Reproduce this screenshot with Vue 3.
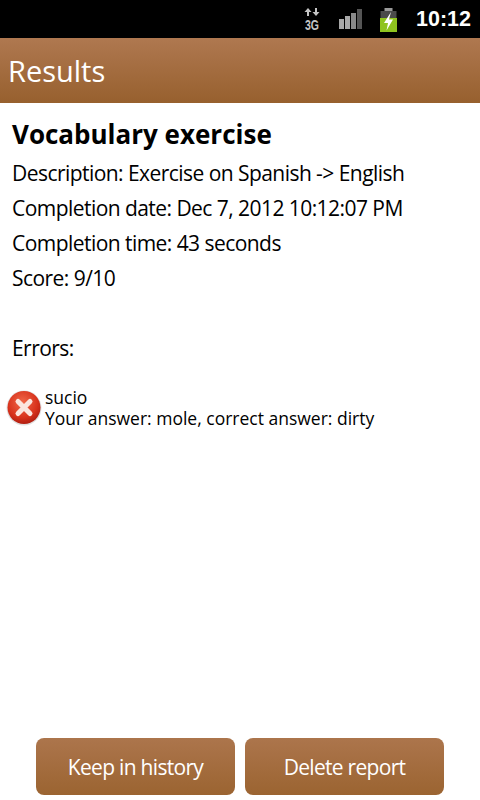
<script setup>
const lines = [
  'Description: Exercise on Spanish -> English',
  'Completion date: Dec 7, 2012 10:12:07 PM',
  'Completion time: 43 seconds',
  'Score: 9/10'
]
</script>

<template>
  <div class="screen">
    <div class="status">
      <svg class="i3g" width="16" height="28" viewBox="0 0 16 28">
        <path d="M4 3 L0.5 7 H3 V11 H5 V7 H7.5 Z M12 11 L8.5 7 H11 V3 H13 V7 H15.5 Z" fill="#c4c4c4"/>
        <text transform="translate(1 24.5) scale(1 1.4)" class="t3g">3G</text>
      </svg>
      <svg class="signal" width="23" height="20" viewBox="0 0 23 20">
        <rect x="0" y="10" width="5" height="10" fill="#a8a8a8"/>
        <rect x="6" y="7" width="5" height="13" fill="#a8a8a8"/>
        <rect x="12" y="4" width="5" height="16" fill="#8a8a8a"/>
        <rect x="18" y="0" width="5" height="20" fill="#555"/>
      </svg>
      <svg class="battery" width="17" height="24" viewBox="0 0 17 24">
        <rect x="4.5" y="0" width="8" height="3" fill="#9a9a9a"/>
        <rect x="0.5" y="3" width="16" height="7" fill="#4a4a4a"/>
        <rect x="0" y="10" width="17" height="14" fill="#8fc31f"/>
        <path d="M11 4 L4 15 H8 L6.5 22.5 L13 11.5 H9 Z" fill="#fff"/>
      </svg>
      <span class="clock">10:12</span>
    </div>
    <header class="titlebar">Results</header>
    <main class="content">
      <h1 class="heading">Vocabulary exercise</h1>
      <p v-for="l in lines" :key="l" class="line">{{ l }}</p>
      <p class="line errors">Errors:</p>
      <div class="err-row">
        <svg class="err-icon" width="36" height="36" viewBox="0 0 36 36">
          <defs>
            <radialGradient id="rg" cx="45%" cy="35%" r="70%">
              <stop offset="0%" stop-color="#f0694a"/>
              <stop offset="65%" stop-color="#d8321c"/>
              <stop offset="100%" stop-color="#a81a0e"/>
            </radialGradient>
          </defs>
          <circle cx="18" cy="18" r="17.5" fill="#000" opacity=".12"/>
          <circle cx="18" cy="17.5" r="16.5" fill="url(#rg)"/>
          <path d="M12 11.5 L24 23.5 M24 11.5 L12 23.5" stroke="#fbe6df" stroke-width="5" stroke-linecap="round"/>
        </svg>
        <div class="err-text">
          <div>sucio</div>
          <div>Your answer: mole, correct answer: dirty</div>
        </div>
      </div>
    </main>
    <footer class="actions">
      <button class="btn">Keep in history</button>
      <button class="btn">Delete report</button>
    </footer>
  </div>
</template>

<style>
html, body { margin: 0; background: #fff; }
</style>

<style scoped>
.screen {
  width: 480px;
  height: 800px;
  display: flex;
  flex-direction: column;
  overflow: hidden;
  background: #fff;
  font-family: "Open Sans", "Noto Sans", sans-serif;
  color: #000;
}
.status {
  height: 38px;
  flex: none;
  background: #000;
  display: flex;
  align-items: center;
  justify-content: flex-end;
  padding-right: 9px;
  box-sizing: border-box;
}
.i3g { margin-right: 19px; }
.t3g { font: bold 10.5px "Liberation Sans", sans-serif; fill: #c4c4c4; }
.signal { margin-right: 18px; }
.battery { margin-right: 19px; margin-top: 1px; }
.clock {
  color: #fff;
  font: bold 21.5px "Liberation Sans", sans-serif;
}
.titlebar {
  height: 65px;
  flex: none;
  box-sizing: border-box;
  padding-left: 8px;
  display: flex;
  align-items: center;
  color: #fff;
  font-size: 29px;
  background: linear-gradient(#af7850, #97602e);
}
.content {
  flex: 1;
  padding-top: 12px;
}
.heading {
  margin: 0 0 2px 12px;
  font-size: 26px;
  line-height: 39px;
  font-weight: 700;
}
.line {
  margin: 0 0 0 12px;
  font-size: 21px;
  letter-spacing: -0.55px;
  line-height: 35px;
}
.errors { margin-top: 35px; }
.err-row {
  display: flex;
  align-items: center;
  margin-top: 21px;
  padding-left: 6px;
}
.err-icon { flex: none; margin-right: 3px; }
.err-text { font-size: 17.5px; line-height: 21px; }
.actions {
  flex: none;
  display: flex;
  justify-content: center;
  gap: 10px;
  padding-bottom: 5px;
}
.btn {
  width: 199px;
  height: 57px;
  border: 0;
  border-radius: 8px;
  background: linear-gradient(#ac754c, #9b6431);
  color: #fff;
  font-family: inherit;
  font-size: 21px;
  letter-spacing: -0.7px;
  padding: 0;
}
</style>
